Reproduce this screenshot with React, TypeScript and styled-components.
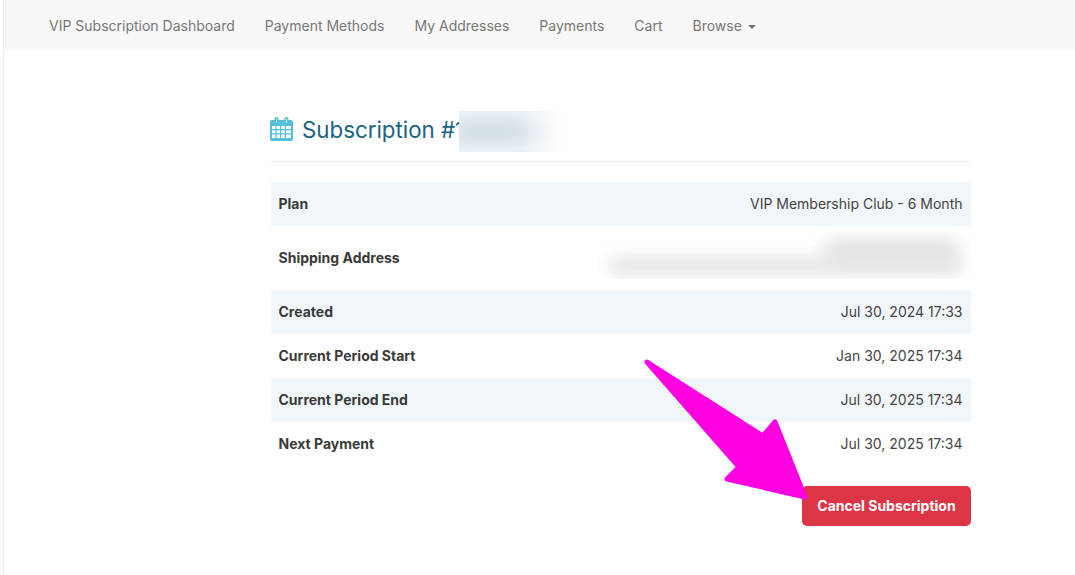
import React from 'react';
import styled, { createGlobalStyle } from 'styled-components';

const navLinks = ['VIP Subscription Dashboard', 'Payment Methods', 'My Addresses', 'Payments', 'Cart'];

const rows = [
  { label: 'Plan', value: 'VIP Membership Club - 6 Month' },
  { label: 'Shipping Address', value: '', tall: true },
  { label: 'Created', value: 'Jul 30, 2024 17:33' },
  { label: 'Current Period Start', value: 'Jan 30, 2025 17:34' },
  { label: 'Current Period End', value: 'Jul 30, 2025 17:34' },
  { label: 'Next Payment', value: 'Jul 30, 2025 17:34' },
];

const CalendarIcon: React.FC = () => (
  <svg width="23" height="24" viewBox="0 0 23 24" aria-hidden="true">
    <path
      fill="#55c1d8"
      fillRule="evenodd"
      d="M2 3h2.5V2a2 2 0 0 1 4 0v1h6V2a2 2 0 0 1 4 0v1H21a2 2 0 0 1 2 2v17a2 2 0 0 1-2 2H2a2 2 0 0 1-2-2V5a2 2 0 0 1 2-2Zm4-1v3.5h1V2Zm10 0v3.5h1V2ZM2 9v3h3.4V9Zm4.6 0v3H10V9Zm4.6 0v3h3.6V9ZM16 9v3h4.9V9ZM2 13.2v3h3.4v-3Zm4.6 0v3H10v-3Zm4.6 0v3h3.6v-3Zm4.8 0v3h4.9v-3ZM2 17.4V21h3.4v-3.6Zm4.6 0V21H10v-3.6Zm4.6 0V21h3.6v-3.6Zm4.8 0V21h4.9v-3.6Z"
    />
  </svg>
);

const App: React.FC = () => (
  <Page>
    <GlobalStyle />
    <Navbar>
      {navLinks.map((link) => (
        <NavLink key={link}>{link}</NavLink>
      ))}
      <NavLink>
        Browse <Caret />
      </NavLink>
    </Navbar>
    <Content>
      <Heading>
        <CalendarIcon />
        <HeadingText>Subscription #1</HeadingText>
        <TitleBlur />
      </Heading>
      <Table>
        {rows.map((row, index) => (
          <Row key={row.label} $striped={index % 2 === 0} $tall={row.tall}>
            <Label>{row.label}</Label>
            <Value>{row.value}</Value>
          </Row>
        ))}
        <AddressBlur>
          <BlurLine $width={135} $height={24} $top={9} $left={226} />
          <BlurLine $width={355} $height={16} $top={28} $left={10} />
        </AddressBlur>
      </Table>
      <Actions>
        <CancelButton>Cancel Subscription</CancelButton>
        <Arrow viewBox="0 0 170 146" width="170" height="146" aria-hidden="true">
          <path
            fill="#ff00e1"
            stroke="#ff00e1"
            strokeWidth="5"
            strokeLinejoin="round"
            d="M4 2 L120 76 L132 62 L162 137 L84 119 L96 107 Z"
          />
        </Arrow>
      </Actions>
    </Content>
  </Page>
);

export default App;

const GlobalStyle = createGlobalStyle`
  html, body {
    margin: 0;
    background: #fff;
    overflow: hidden;
  }
  body {
    font-family: Inter, "Liberation Sans", sans-serif;
  }
`;

const Page = styled.div`
  margin-left: 3px;
  min-height: 575px;
  border-left: 1px solid #eeeeee;
  box-sizing: border-box;
`;

const Navbar = styled.nav`
  display: flex;
  align-items: center;
  gap: 30px;
  height: 51px;
  padding-left: 45px;
  box-sizing: border-box;
  background: #f8f8f8;
  border-bottom-left-radius: 4px;
`;

const NavLink = styled.span`
  font-size: 14px;
  color: #777777;
  white-space: nowrap;
`;

const Caret = styled.span`
  display: inline-block;
  margin-left: 2px;
  vertical-align: middle;
  border-top: 4px solid #777777;
  border-left: 4px solid transparent;
  border-right: 4px solid transparent;
`;

const Content = styled.main`
  width: 700px;
  margin-left: 267px;
`;

const Heading = styled.div`
  position: relative;
  display: flex;
  align-items: center;
  gap: 9px;
  height: 111px;
  padding-top: 46px;
  box-sizing: border-box;
  border-bottom: 1px solid #eeeeee;
  margin-bottom: 20px;

  svg {
    margin-left: -1px;
  }
`;

const HeadingText = styled.h1`
  margin: 0;
  font-size: 22.3px;
  font-weight: 400;
  color: #1a6383;
`;

const TitleBlur = styled.div`
  position: absolute;
  left: 188px;
  top: 60px;
  width: 104px;
  height: 41px;
  background: linear-gradient(90deg, rgba(255, 255, 255, 0) 60%, #ffffff 100%),
    radial-gradient(ellipse 70% 45% at 30% 50%, #d5e0e7 25%, #e9eff3 100%);
`;

const Table = styled.div`
  position: relative;
  display: flex;
  flex-direction: column;
`;

const Row = styled.div<{ $striped: boolean; $tall?: boolean }>`
  display: flex;
  align-items: center;
  justify-content: space-between;
  height: ${({ $tall }) => ($tall ? '64px' : '44px')};
  padding: 0 8.5px 2px 7.5px;
  box-sizing: border-box;
  font-size: 14px;
  color: #3a3a3a;
  background: ${({ $striped }) => ($striped ? '#f1f6fa' : '#ffffff')};
`;

const Label = styled.span`
  font-weight: 650;
`;

const Value = styled.span`
  font-weight: 400;
  color: #444444;
`;

const AddressBlur = styled.div`
  position: absolute;
  left: 327px;
  top: 48px;
  width: 382px;
  height: 49px;
  background: #ffffff;
  overflow: hidden;
`;

const BlurLine = styled.div<{ $width: number; $height: number; $top: number; $left: number }>`
  position: absolute;
  left: ${({ $left }) => $left}px;
  top: ${({ $top }) => $top}px;
  width: ${({ $width }) => $width}px;
  height: ${({ $height }) => $height}px;
  border-radius: 8px;
  background: #e2e2e2;
  filter: blur(8px);
`;

const Actions = styled.div`
  position: relative;
  display: flex;
  justify-content: flex-end;
  margin-top: 20px;
`;

const CancelButton = styled.button`
  width: 169px;
  height: 40px;
  border: none;
  border-radius: 5px;
  background: #dc3545;
  color: #ffffff;
  font-family: inherit;
  font-size: 14px;
  font-weight: 700;
  padding: 0 0 2px;
`;

const Arrow = styled.svg`
  position: absolute;
  left: 372px;
  top: -126px;
  overflow: visible;
  pointer-events: none;
`;
